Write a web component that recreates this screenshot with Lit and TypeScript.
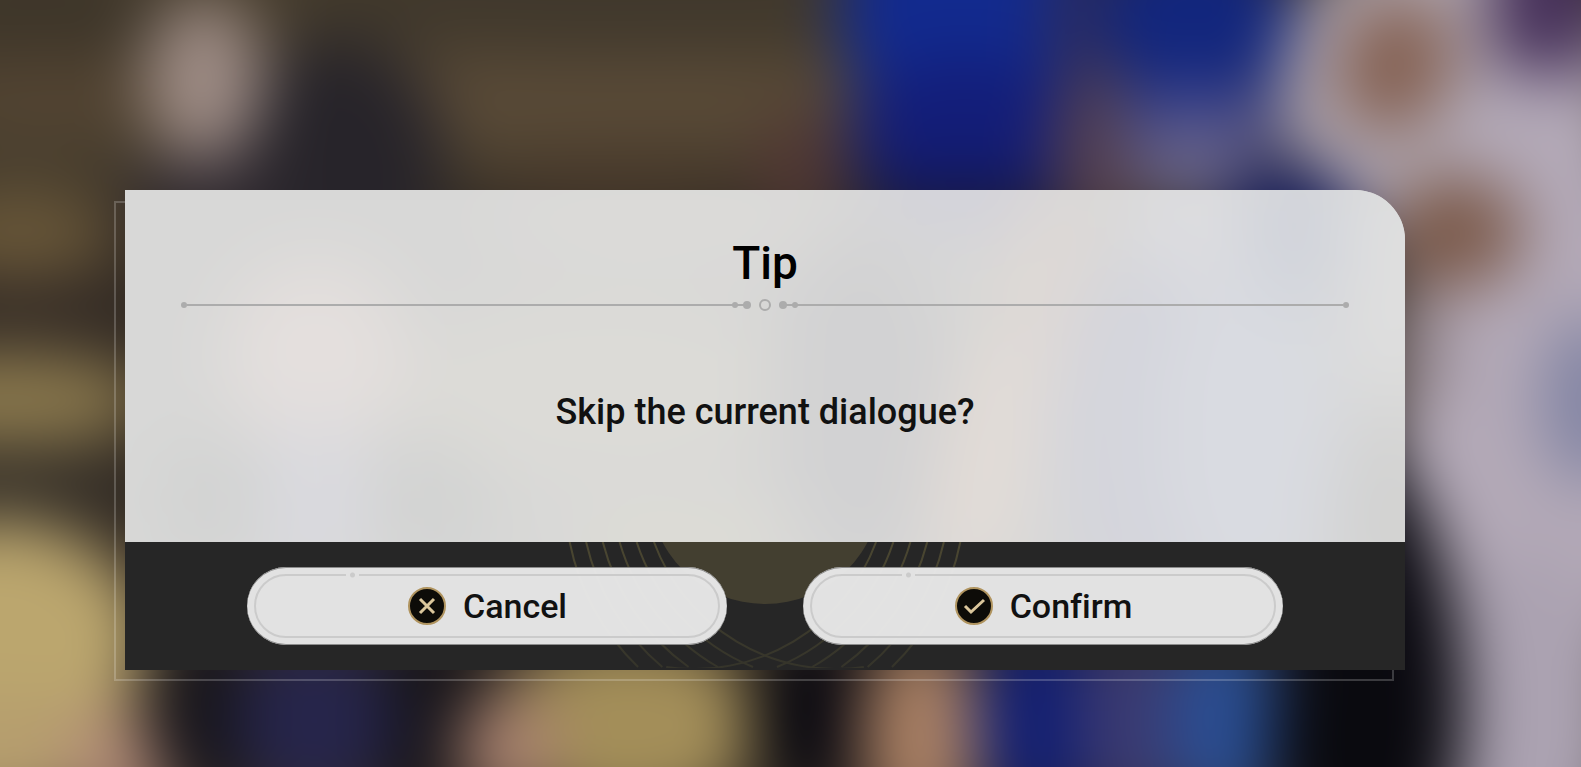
import { LitElement, html, css, svg } from "lit";
import { customElement } from "lit/decorators.js";

/* Soft shapes of the scene behind the dialog: cx, cy, rx, ry, colour, rotation */
type Blob = [number, number, number, number, string, number?];

const SCENE: Blob[] = [
  [560, 100, 420, 48, "#594a37"],
  [600, 0, 320, 55, "#40382c"],
  [40, 10, 120, 50, "#3d3529"],
  [50, 95, 110, 40, "#534432"],
  [20, 235, 100, 42, "#6a5839"],
  [10, 310, 135, 30, "#352c26"],
  [10, 400, 140, 48, "#8a784d"],
  [10, 485, 135, 40, "#352f28"],
  [0, 640, 145, 120, "#bba66e"],
  [0, 760, 110, 60, "#b59d6e"],
  [130, 765, 65, 62, "#b08a76"],
  [335, 160, 110, 120, "#27242a"],
  [210, 195, 80, 40, "#302a31"],
  [204, 80, 60, 82, "#9d8b84"],
  [620, 185, 130, 34, "#46382a"],
  [800, 170, 45, 60, "#503733"],
  [968, 10, 130, 140, "#122a8e"],
  [965, 130, 118, 70, "#131d78"],
  [960, 205, 110, 30, "#15174a"],
  [1088, 20, 40, 70, "#2f2c58"],
  [1100, 150, 48, 90, "#55404c"],
  [1195, 20, 98, 90, "#12267d"],
  [1200, 120, 90, 35, "#45498a"],
  [1200, 170, 70, 40, "#6a6587"],
  [1455, 90, 175, 170, "#b0a7b1"],
  [1290, 225, 70, 60, "#131a56"],
  [1545, 0, 55, 120, "#46305a"],
  [1550, 130, 45, 60, "#84758d"],
  [1395, 65, 58, 70, "#866355", 20],
  [1535, 400, 140, 330, "#b3a9b7"],
  [1590, 400, 50, 85, "#8385a4"],
  [1455, 232, 68, 58, "#7d5c4d"],
  [1415, 350, 30, 60, "#8d7f84"],
  [1525, 720, 100, 170, "#aba2b1"],
  [1370, 650, 90, 220, "#0a0910", -8],
  [200, 715, 55, 90, "#17151a"],
  [430, 720, 70, 90, "#151318"],
  [315, 720, 80, 85, "#26254b"],
  [630, 725, 135, 90, "#a38e59"],
  [508, 750, 50, 60, "#a6806e"],
  [815, 715, 68, 80, "#0b0a11"],
  [920, 735, 60, 100, "#a87f63"],
  [1038, 720, 62, 100, "#111e72"],
  [1135, 720, 60, 100, "#3b3a70"],
  [1225, 720, 56, 100, "#2a4e92"],
  [1345, 740, 75, 100, "#0a0a0f"],
];

const TINTS: Blob[] = [
  [315, 355, 90, 95, "#e4dfdd"],
  [310, 500, 60, 80, "#dadadf"],
  [210, 500, 60, 60, "#d2d3d2"],
  [430, 500, 60, 70, "#d2d3d2"],
  [600, 390, 200, 90, "#dcdbd7"],
  [660, 220, 180, 60, "#dbdad8"],
  [680, 540, 120, 40, "#dddcd6"],
  [860, 400, 90, 170, "#d2d2d3"],
  [960, 190, 90, 40, "#d2d2db"],
  [1045, 290, 42, 110, "#dfd9d5", 8],
  [985, 460, 45, 130, "#e3dcd7", 12],
  [1140, 430, 85, 180, "#d4d5dc"],
  [1250, 430, 90, 180, "#d9dbe1"],
  [1195, 220, 65, 60, "#dddde0"],
  [1300, 230, 60, 75, "#d1d4db"],
  [1395, 270, 50, 130, "#dfdfdf"],
  [1385, 510, 50, 90, "#d2d2d1"],
];

const ellipses = (list: Blob[]) =>
  list.map(
    ([cx, cy, rx, ry, fill, turn = 0]) =>
      svg`<ellipse cx=${cx} cy=${cy} rx=${rx} ry=${ry} fill=${fill} transform=${`rotate(${turn} ${cx} ${cy})`} />`
  );

@customElement("app-root")
export class AppRoot extends LitElement {
  static styles = css`
    :host {
      display: block;
      font-family: Roboto, "Open Sans", sans-serif;
      font-weight: 500;
      font-variant-ligatures: none;
      color: #111;
    }
    * {
      box-sizing: border-box;
    }
    .stage {
      position: relative;
      isolation: isolate;
      min-height: 100vh;
      padding: 190px 176px 0 125px;
      overflow: hidden;
      background: #2a241f;
    }
    .scene,
    .tint,
    .orbit {
      position: absolute;
      inset: 0;
      width: 100%;
      height: 100%;
      z-index: -1;
    }
    .dialog {
      position: relative;
    }
    .frame {
      position: absolute;
      inset: 11px 11px -11px -11px;
      border: 2px solid rgba(255, 255, 255, 0.2);
      clip-path: polygon(
        0 0,
        20px 0,
        20px calc(100% - 20px),
        100% calc(100% - 20px),
        100% 100%,
        0 100%
      );
      z-index: -1;
    }
    .body {
      position: relative;
      isolation: isolate;
      display: flex;
      flex-direction: column;
      align-items: center;
      padding: 43px 56px 108px;
      border-radius: 0 50px 0 0;
      overflow: hidden;
      background: #d8d8d7;
    }
    h1 {
      margin: 0;
      font-size: 46px;
      line-height: 60px;
      font-weight: 500;
      color: #000;
    }
    .rule {
      display: flex;
      align-items: center;
      width: 100%;
      height: 14px;
      margin-top: 5px;
      color: #acacac;
    }
    .line {
      flex: 1;
      height: 2px;
      background: currentColor;
    }
    .end {
      width: 6px;
      height: 6px;
      border-radius: 50%;
      background: currentColor;
    }
    .dots {
      flex: none;
      display: block;
    }
    p {
      margin: 78px 0 0;
      font-size: 36px;
      line-height: 44px;
    }
    .actions {
      position: relative;
      isolation: isolate;
      display: grid;
      grid-template-columns: 1fr 1fr;
      gap: 76px;
      padding: 25px 122px;
      overflow: hidden;
      background: #262626;
    }
    .orbit {
      inset: 0 0 2px;
      height: auto;
    }
    button {
      position: relative;
      display: flex;
      align-items: center;
      justify-content: center;
      gap: 16px;
      height: 78px;
      padding: 0;
      border: 0;
      border-radius: 39px;
      background: rgba(234, 234, 234, 0.96);
      box-shadow: inset 0 1px #8c8c8c, inset 0 -1px #8c8c8c;
      font: inherit;
      font-size: 34px;
      line-height: 44px;
      color: #111;
      cursor: pointer;
    }
    .inset {
      position: absolute;
      inset: 7px;
      border: 2px solid #cbcbcb;
      border-radius: 32px;
    }
    .stud {
      position: absolute;
      left: 99px;
      top: 5px;
      width: 13px;
      height: 6px;
      background: radial-gradient(circle at center, #cbcbcb 2px, #e2e2e2 3px);
    }
    .icon {
      display: block;
      width: 40px;
      height: 40px;
    }
  `;

  private renderButton(label: string, mark: string) {
    return html`
      <button type="button">
        <span class="inset"></span>
        <span class="stud"></span>
        <svg class="icon" viewBox="0 0 40 40" aria-hidden="true">
          <circle cx="20" cy="20" r="18" fill="#0d0c08" stroke="#b0945f" stroke-width="2" />
          <path d=${mark} fill="none" stroke="#dbc79c" stroke-width="3" />
        </svg>
        <span>${label}</span>
      </button>
    `;
  }

  private renderOrbit() {
    const arcs = [0, 1, 2, 3, 4, 5];
    return html`
      <svg class="orbit" viewBox="0 0 1280 126" preserveAspectRatio="xMidYMin slice" aria-hidden="true">
        <defs>
          <linearGradient id="fade" gradientUnits="userSpaceOnUse" x1="0" y1="0" x2="0" y2="126">
            <stop offset="0" stop-color="#4b4731" />
            <stop offset="1" stop-color="#35342a" />
          </linearGradient>
        </defs>
        <circle cx="640" cy="-54" r="116" fill="#433f30" />
        <g fill="none" stroke="url(#fade)" stroke-width="2">
          ${arcs.map((k) => {
            const shift = 39 + 6.4 * k;
            const cy = -47 - 4 * k;
            const r = 239 - 9 * k;
            const h = Math.sqrt(r * r - cy * cy);
            const low = 125 - cy;
            const w = low < r ? Math.sqrt(r * r - low * low) : 0;
            /* the two innermost arcs run on past their lowest point */
            const tail = k > 4 ? -w : w;
            const drawn = (s: number) =>
              `M${640 + s * (shift - h)} 0A${r} ${r} 0 0 ${s > 0 ? 0 : 1} ${640 + s * (shift - tail)} 125`;
            return svg`<path d=${drawn(1)} /><path d=${drawn(-1)} />`;
          })}
        </g>
      </svg>
    `;
  }

  render() {
    return html`
      <main class="stage">
        <svg class="scene" viewBox="0 0 1581 767" preserveAspectRatio="none" aria-hidden="true">
          <defs>
            <filter id="haze" x="-20%" y="-20%" width="140%" height="140%" color-interpolation-filters="sRGB">
              <feGaussianBlur stdDeviation="32" />
            </filter>
          </defs>
          <g filter="url(#haze)">
            <rect x="-200" y="-200" width="1981" height="1167" fill="#332b24" />
            <rect x="-200" y="-200" width="1050" height="390" fill="#483e2e" />
            ${ellipses(SCENE)}
          </g>
        </svg>
        <section class="dialog" role="dialog" aria-labelledby="title" aria-describedby="message">
          <div class="frame"></div>
          <div class="body">
            <svg class="tint" viewBox="125 190 1280 352" preserveAspectRatio="none" aria-hidden="true">
              <defs>
                <filter id="mist" x="-20%" y="-20%" width="140%" height="140%" color-interpolation-filters="sRGB">
                  <feGaussianBlur stdDeviation="34" />
                </filter>
              </defs>
              <g filter="url(#mist)">
                <rect x="0" y="0" width="1581" height="767" fill="#d8d8d7" />
                ${ellipses(TINTS)}
              </g>
            </svg>
            <h1 id="title">Tip</h1>
            <div class="rule">
              <span class="end"></span>
              <span class="line"></span>
              <svg class="dots" width="66" height="14" viewBox="0 0 66 14" fill="currentColor" aria-hidden="true">
                <path d="M0 6h15v2H0zM51 6h15v2h-15z" />
                <circle cx="3" cy="7" r="3" />
                <circle cx="15" cy="7" r="4" />
                <circle cx="51" cy="7" r="4" />
                <circle cx="63" cy="7" r="3" />
                <circle cx="33" cy="7" r="5" fill="none" stroke="currentColor" stroke-width="2" />
              </svg>
              <span class="line"></span>
              <span class="end"></span>
            </div>
            <p id="message">Skip the current dialogue?</p>
          </div>
          <div class="actions">
            ${this.renderOrbit()}
            ${this.renderButton("Cancel", "M13 13L27 27M27 13L13 27")}
            ${this.renderButton("Confirm", "M11 20L17 26L30 14")}
          </div>
        </section>
      </main>
    `;
  }
}
